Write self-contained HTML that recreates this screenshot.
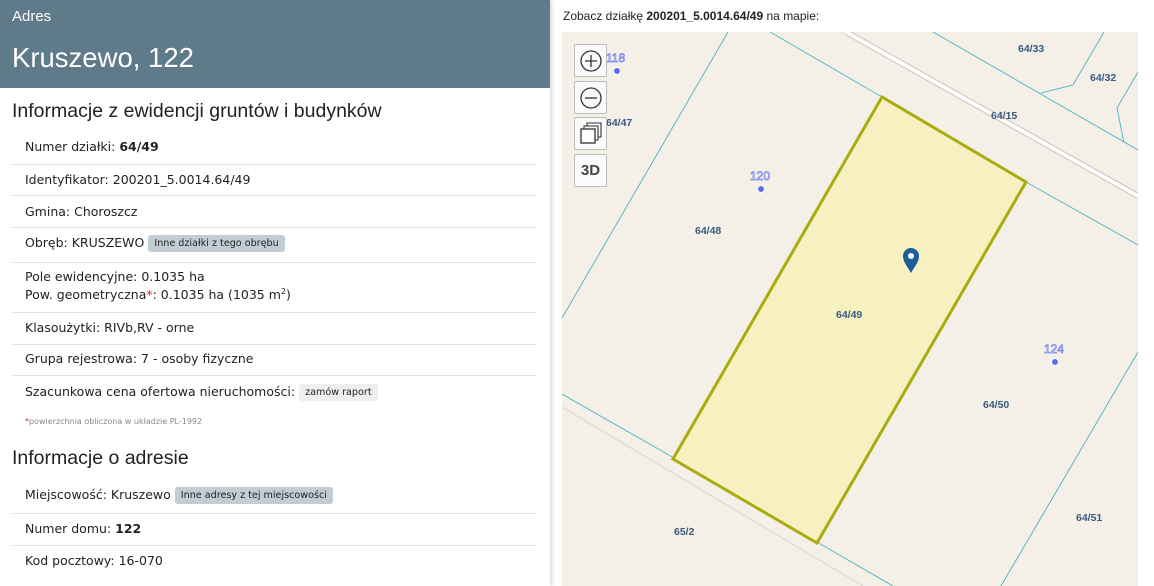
<!DOCTYPE html>
<html><head><meta charset="utf-8"><style>
*{margin:0;padding:0;box-sizing:border-box}
body{width:1154px;height:586px;overflow:hidden;background:#fff;font-family:"DejaVu Sans",Verdana,sans-serif;color:#222;position:relative}
#left{position:absolute;left:0;top:0;width:550px;height:586px;background:#fff;box-shadow:2px 0 4px rgba(0,0,0,.15)}
#hdr{height:88px;background:#5f7a88;color:#fff;font-family:"Liberation Sans",sans-serif;position:relative}
.a{position:absolute}
.t{font-size:12.5px;white-space:nowrap;position:absolute;left:25px}
.sep{position:absolute;left:12px;width:525px;height:1px;background:#e2e2e2}
h2{position:absolute;left:12px;font-family:"Liberation Sans",sans-serif;font-weight:normal;font-size:19.5px;color:#222}
.btn{display:inline-block;background:#c2ccd3;border-radius:3px;font-size:9.6px;padding:3px 6px;margin-left:4px;vertical-align:1px}
.btn2{background:#eee}
.mb{position:absolute;left:574px;width:33px;height:33px;background:#fafafa;border:1px solid #bbb;border-radius:2px}
</style></head><body>
<div id="left">
<div id="hdr"><div class="a" style="left:12px;top:8px;font-size:15px">Adres</div><div class="a" style="left:12px;top:42px;font-size:27.5px">Kruszewo, 122</div></div>
<h2 style="top:100px">Informacje z ewidencji gruntów i budynków</h2>
<div class="t" style="top:139px">Numer działki: <b>64/49</b></div><div class="sep" style="top:164px"></div>
<div class="t" style="top:172px">Identyfikator: 200201_5.0014.64/49</div><div class="sep" style="top:195px"></div>
<div class="t" style="top:204px">Gmina: Choroszcz</div><div class="sep" style="top:227px"></div>
<div class="t" style="top:235px">Obręb: KRUSZEWO<span class="btn">Inne działki z tego obrębu</span></div><div class="sep" style="top:262px"></div>
<div class="t" style="top:269px">Pole ewidencyjne: 0.1035 ha</div>
<div class="t" style="top:287px">Pow. geometryczna<span style="color:#d22">*</span>: 0.1035 ha (1035 m<sup style="font-size:8px">2</sup>)</div><div class="sep" style="top:312px"></div>
<div class="t" style="top:320px">Klasoużytki: RIVb,RV - orne</div><div class="sep" style="top:344px"></div>
<div class="t" style="top:351px">Grupa rejestrowa: 7 - osoby fizyczne</div><div class="sep" style="top:375px"></div>
<div class="t" style="top:384px">Szacunkowa cena ofertowa nieruchomości:<span class="btn btn2">zamów raport</span></div>
<div class="t" style="top:417px;font-size:8px;color:#888"><span style="color:#d22">*</span>powierzchnia obliczona w układzie PL-1992</div>
<h2 style="top:447px">Informacje o adresie</h2>
<div class="t" style="top:487px">Miejscowość: Kruszewo<span class="btn">Inne adresy z tej miejscowości</span></div><div class="sep" style="top:513px"></div>
<div class="t" style="top:521px">Numer domu: <b>122</b></div><div class="sep" style="top:545px"></div>
<div class="t" style="top:553px">Kod pocztowy: 16-070</div>
</div>
<div class="a" style="left:563px;top:9px;font-size:12px;font-family:'Liberation Sans',sans-serif">Zobacz działkę <b>200201_5.0014.64/49</b> na mapie:</div>
<svg class="a" style="left:0;top:0" width="1154" height="586" viewBox="0 0 1154 586">
<defs><clipPath id="c"><rect x="562" y="32" width="576" height="554"/></clipPath></defs>
<g clip-path="url(#c)" fill="none">
<rect x="562" y="32" width="576" height="554" fill="#f4f0e7"/>
<line x1="562" y1="407" x2="863" y2="586" stroke="#e4dccd" stroke-width="1.5"/>
<line x1="846" y1="32" x2="1138" y2="196" stroke="#c8c4bc" stroke-width="6"/>
<line x1="846" y1="32" x2="1138" y2="196" stroke="#fff" stroke-width="4"/>
<g stroke="#5bb5c8" stroke-width="1">
<polyline points="728,32 562,318"/>
<polyline points="770,32 882,97"/>
<polyline points="1026,182 1138,245"/>
<polyline points="562,394 674,458"/>
<polyline points="817,542 893,586"/>
<polyline points="933,32 1138,150"/>
<polyline points="1104,32 1073,85 1041,93"/>
<polyline points="1138,72 1117,108 1124,143"/>
<polyline points="1138,352 1001,586"/>
</g>
<polygon points="882,97 1026,182 817,543 673,459" fill="#f7f1c2" stroke="#a9ac0f" stroke-width="3"/>
<g font-family="Liberation Sans,sans-serif" font-size="10.5" font-weight="bold" fill="#3b5a80" stroke="none">
<text x="1018" y="52">64/33</text><text x="1090" y="81">64/32</text><text x="991" y="119">64/15</text>
<text x="606" y="126">64/47</text><text x="695" y="234">64/48</text><text x="836" y="318">64/49</text>
<text x="983" y="408">64/50</text><text x="1076" y="521">64/51</text><text x="674" y="535">65/2</text>
</g>
<g font-family="Liberation Sans,sans-serif" font-size="12" fill="#fff" stroke="#7b8cf0" stroke-width=".8">
<text x="606" y="62">118</text><text x="750" y="180">120</text><text x="1044" y="353">124</text>
</g>
<g fill="#5a6ff0" stroke="#fff" stroke-width="1"><circle cx="617" cy="71" r="3.5"/><circle cx="761" cy="189" r="3.5"/><circle cx="1055" cy="362" r="3.5"/><circle cx="911" cy="268" r="3"/></g>
<path d="M911 273 C906 265 903 261 903 256 A8 8 0 0 1 919 256 C919 261 916 265 911 273Z" fill="#1e5d99"/>
<circle cx="911" cy="256" r="3" fill="#fff"/>
</g>
</svg>
<div class="mb" style="top:44px"><svg width="31" height="31"><circle cx="16" cy="16" r="10" fill="none" stroke="#333" stroke-width="1.3"/><path d="M16 10v12M10 16h12" stroke="#333" stroke-width="1.3"/></svg></div>
<div class="mb" style="top:81px"><svg width="31" height="31"><circle cx="16" cy="16" r="10" fill="none" stroke="#333" stroke-width="1.3"/><path d="M10 16h12" stroke="#333" stroke-width="1.3"/></svg></div>
<div class="mb" style="top:117px"><svg width="31" height="31"><rect x="6" y="11" width="14" height="14" fill="#fff" stroke="#333" stroke-width="1.3"/><path d="M9 11V8h14v14h-3M12 8V5h14v14h-3" fill="none" stroke="#333" stroke-width="1.1"/></svg></div>
<div class="mb" style="top:154px;font:bold 15px 'Liberation Sans',sans-serif;color:#444;text-align:center;line-height:31px">3D</div>
</body></html>
